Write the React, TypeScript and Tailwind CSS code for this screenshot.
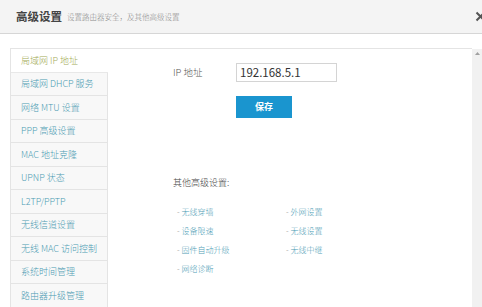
import React from "react";

const FONT = {
  fontFamily: '"Noto Sans CJK SC", "Liberation Sans", sans-serif',
};

const MENU_ITEMS = [
  "局域网 IP 地址",
  "局域网 DHCP 服务",
  "网络 MTU 设置",
  "PPP 高级设置",
  "MAC 地址克隆",
  "UPNP 状态",
  "L2TP/PPTP",
  "无线信道设置",
  "无线 MAC 访问控制",
  "系统时间管理",
  "路由器升级管理",
];

const OTHER_LINKS = [
  "无线穿墙",
  "外网设置",
  "设备限速",
  "无线设置",
  "固件自动升级",
  "无线中继",
  "网络诊断",
];

export default function App() {
  return (
    <div
      className="relative w-[482px] h-[307px] overflow-hidden bg-white"
      style={FONT}
    >
      <div className="flex h-[34px] items-center border-b border-[#d6d6d6] bg-[#f4f4f4] pl-[16px]">
        <span className="text-[11.5px] font-bold leading-none text-[#444]">
          高级设置
        </span>
        <span className="ml-[5px] text-[7.5px] font-light leading-none text-[#8a8a8a]">
          设置路由器安全，及其他高级设置
        </span>
        <svg
          className="ml-auto mr-[-4px]"
          width="11"
          height="11"
          viewBox="0 0 11 11"
        >
          <path
            d="M1.5 1.5 L9.5 9.5 M9.5 1.5 L1.5 9.5"
            stroke="#555"
            strokeWidth="2"
          />
        </svg>
      </div>

      <div className="flex pl-[10px] pt-[14px]">
        <div className="flex flex-1 border-l border-t border-[#e4e4e4]">
          <div className="w-[97px] shrink-0">
            {MENU_ITEMS.map((item, index) => (
              <div
                key={item}
                className={
                  index === 0
                    ? "flex h-[23.5px] items-center border-b border-[#e8e8e8] bg-white pl-[10px] text-[9px] font-light text-[#a3ab55]"
                    : "flex h-[23.5px] items-center border-b border-r border-[#e4e4e4] bg-[#f8f8f8] pl-[10px] text-[9px] font-light text-[#4b9bb2]"
                }
              >
                {item}
              </div>
            ))}
          </div>

          <div className="flex-1 pl-[65px] pt-[14px]">
            <div className="flex items-center">
              <span className="w-[63px] text-[9.5px] font-light text-[#555]">IP 地址</span>
              <div className="flex h-[19px] w-[101px] items-center border border-[#d4d4d4] bg-white pl-[3px] text-[11.5px] text-[#333]">
                192.168.5.1
              </div>
            </div>
            <div className="ml-[63px] mt-[14px] flex h-[22px] w-[56px] items-center justify-center bg-[#1a95cf] text-[9px] font-bold text-white">
              保存
            </div>

            <div className="mt-[59px] text-[9px] font-light leading-[12px] text-[#444]">
              其他高级设置:
            </div>
            <div className="mt-[17px] grid w-[220px] grid-cols-[109px_1fr] gap-y-[7px] pl-[4px]">
              {OTHER_LINKS.map((link) => (
                <div
                  key={link}
                  className="text-[8px] font-light leading-[12px] text-[#4fa0b6]"
                >
                  <span className="text-[#888]">- </span>
                  {link}
                </div>
              ))}
            </div>
          </div>
        </div>

        <div className="mt-[1px] flex h-[260px] w-[10px] shrink-0 justify-center bg-[#f1f1f1] pt-[3px]">
          <svg width="5" height="3" viewBox="0 0 5 3">
            <path d="M0 3 L2.5 0 L5 3 Z" fill="#a0a0a0" />
          </svg>
        </div>
      </div>
    </div>
  );
}
